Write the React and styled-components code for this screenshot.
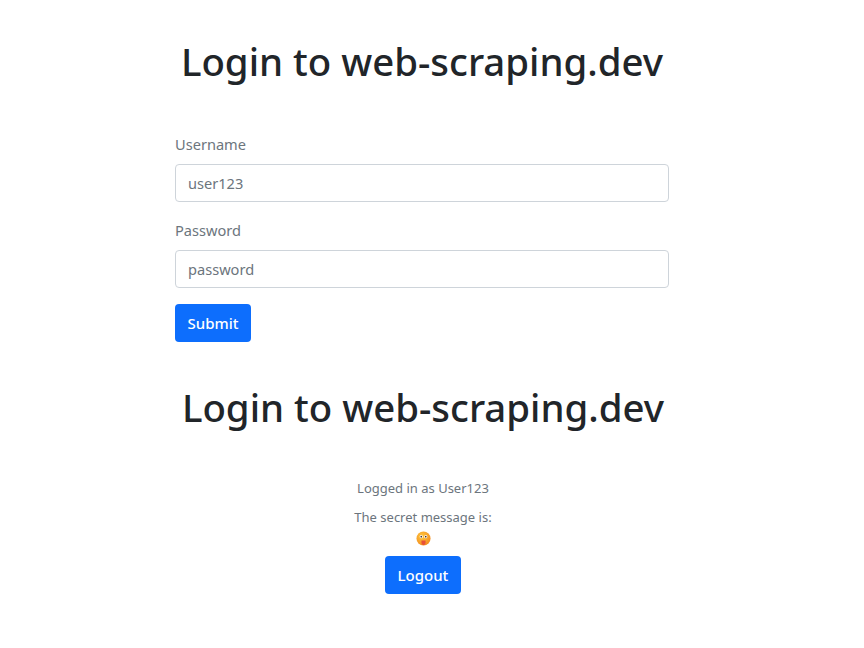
import React from "react";
import styled, { createGlobalStyle } from "styled-components";

const Global = createGlobalStyle`
  html, body { margin: 0; padding: 0; background: #fff; }
  body { font-family: "Noto Sans", "Open Sans", sans-serif; color: #212529; }
  * { box-sizing: border-box; }
`;
const Page = styled.div`
  display: flex;
  flex-direction: column;
  padding-top: 38px;
`;
const Section = styled.section`
  width: ${(p) => p.$width}px;
  margin-top: ${(p) => p.$top || 0}px;
  display: flex;
  flex-direction: column;
  align-items: center;
`;
const Title = styled.h1`
  margin: 0;
  font-size: 38.4px;
  line-height: 46px;
  font-weight: 500;
  color: #212529;
  text-align: center;
`;
const Form = styled.form`
  width: 494px;
  margin-top: 48px;
  display: flex;
  flex-direction: column;
`;
const Label = styled.label`
  font-size: 14.6px;
  line-height: 24px;
  color: #6c757d;
  margin-bottom: 8px;
`;
const Input = styled.input`
  height: 38px;
  width: 100%;
  border: 1px solid #ced4da;
  border-radius: 4px;
  padding: 0 12px;
  font: inherit;
  font-size: 14.6px;
  margin-bottom: 16px;
  &::placeholder { color: #6c757d; opacity: 1; }
`;
const Button = styled.button`
  height: 38px;
  min-width: 76px;
  padding: 0 12px;
  background: #0d6efd;
  color: #fff;
  border: none;
  border-radius: 4px;
  font: inherit;
  font-size: 15px;
  font-weight: 500;
  align-self: ${(p) => p.$align || "flex-start"};
`;
const Info = styled.div`
  margin-top: 49px;
  display: flex;
  flex-direction: column;
  align-items: center;
`;
const Line = styled.p`
  margin: 0 0 ${(p) => p.$mb || 0}px;
  font-size: 13px;
  line-height: 18px;
  color: #6c757d;
`;
const Emoji = styled.svg`
  display: block;
  margin: 5px 0 10px 1px;
`;
export default function App() {
  return (
    <Page>
      <Global />
      <Section $width={844}>
        <Title>Login to web-scraping.dev</Title>
        <Form onSubmit={(e) => e.preventDefault()}>
          <Label>Username</Label>
          <Input placeholder="user123" />
          <Label>Password</Label>
          <Input placeholder="password" />
          <Button>Submit</Button>
        </Form>
      </Section>
      <Section $width={846} $top={42}>
        <Title>Login to web-scraping.dev</Title>
        <Info>
          <Line $mb={11}>Logged in as User123</Line>
          <Line>The secret message is:</Line>
          <Emoji width="15" height="15" viewBox="0 0 16 16">
            <defs>
              <radialGradient id="face" cx="0.4" cy="0.35" r="0.7">
                <stop offset="0" stopColor="#ffc83d" />
                <stop offset="1" stopColor="#f28a1e" />
              </radialGradient>
            </defs>
            <circle cx="8" cy="8" r="7.5" fill="url(#face)" />
            <circle cx="5.6" cy="6" r="1.7" fill="#fff" />
            <circle cx="10.4" cy="6" r="1.7" fill="#fff" />
            <circle cx="5.6" cy="6" r="0.9" fill="#4a3020" />
            <circle cx="10.4" cy="6" r="0.9" fill="#4a3020" />
            <path d="M5.8 10 H10.2 V12.5 A2.2 2.5 0 0 1 5.8 12.5 Z" fill="#e8503a" />
          </Emoji>
          <Button $align="center">Logout</Button>
        </Info>
      </Section>
    </Page>
  );
}
